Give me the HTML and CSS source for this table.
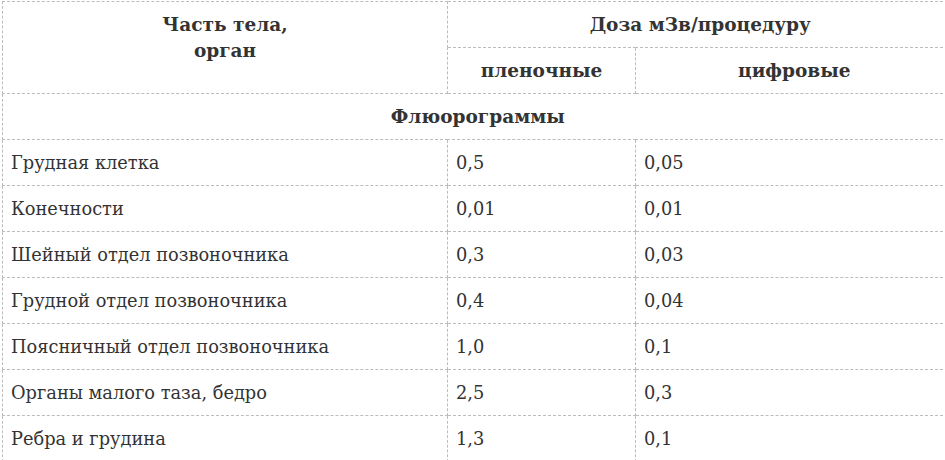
FILE: index.html
```html
<!DOCTYPE html>
<html lang="ru">
<head>
<meta charset="utf-8">
<title>Дозы облучения</title>
<link rel="stylesheet" href="styles.css">
</head>
<body>
<div class="wrap">
<table class="dose">
<colgroup><col class="c1"><col class="c2"><col class="c3"></colgroup>
<thead>
<tr><th rowspan="2" class="organ">Часть тела,<br>орган</th><th colspan="2" class="last">Доза мЗв/процедуру</th></tr>
<tr><th>пленочные</th><th class="last">цифровые</th></tr>
</thead>
<tbody>
<tr class="section"><th colspan="3" class="last">Флюорограммы</th></tr>
<tr><td>Грудная клетка</td><td>0,5</td><td class="last">0,05</td></tr>
<tr><td>Конечности</td><td>0,01</td><td class="last">0,01</td></tr>
<tr><td>Шейный отдел позвоночника</td><td>0,3</td><td class="last">0,03</td></tr>
<tr><td>Грудной отдел позвоночника</td><td>0,4</td><td class="last">0,04</td></tr>
<tr><td>Поясничный отдел позвоночника</td><td>1,0</td><td class="last">0,1</td></tr>
<tr><td>Органы малого таза, бедро</td><td>2,5</td><td class="last">0,3</td></tr>
<tr><td>Ребра и грудина</td><td>1,3</td><td class="last">0,1</td></tr>
</tbody>
</table>
</div>
</body>
</html>
```
FILE: styles.css
```css
html, body {
  margin: 0;
  padding: 0;
  background: #fff;
  overflow: hidden;
}
.wrap {
  padding: 1px 0 0 2px;
  width: 943px;
  overflow: hidden;
}
.dose {
  width: 950px;
  table-layout: fixed;
  border-collapse: collapse;
  font-family: "DejaVu Serif", serif;
  font-size: 17.8px;
  color: #333;
}
.c1 { width: 445px; }
.c2 { width: 188px; }
.c3 { width: 317px; }
.dose th, .dose td {
  border: 1px dashed #bcbcbc;
  padding: 10px 8px 9px;
  line-height: 26px;
  text-align: left;
  vertical-align: middle;
}
.dose .last {
  border-right: none;
}
.dose th {
  text-align: center;
  font-weight: bold;
  font-size: 18.5px;
}
.dose th.organ {
  vertical-align: top;
}
```
